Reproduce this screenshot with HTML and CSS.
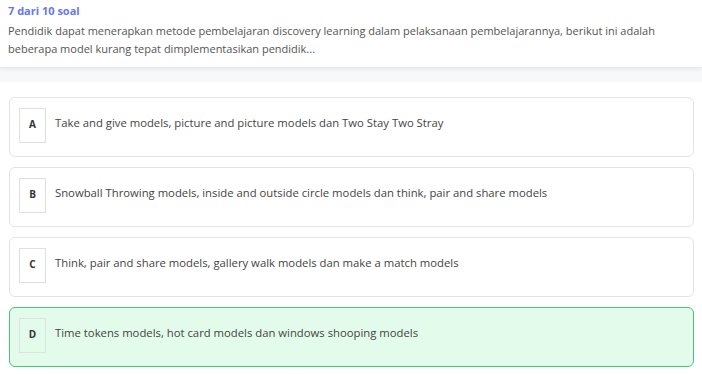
FILE: index.html
```html
<!DOCTYPE html>
<html lang="en">
<head>
    <meta charset="UTF-8">
    <meta name="viewport" content="width=device-width, initial-scale=1.0">
    <title>Soal</title>
    <link rel="stylesheet" href="styles.css">
</head>
<body>
    <header class="question-header">
        <div class="question-count">7 dari 10 soal</div>
        <p class="question-text">Pendidik dapat menerapkan metode pembelajaran discovery learning dalam pelaksanaan pembelajarannya, berikut ini adalah beberapa model kurang tepat dimplementasikan pendidik...</p>
    </header>
    <div class="spacer"></div>
    <main class="options">
        <div class="option">
            <span class="option-letter">A</span>
            <span class="option-text">Take and give models, picture and picture models dan Two Stay Two Stray</span>
        </div>
        <div class="option">
            <span class="option-letter">B</span>
            <span class="option-text">Snowball Throwing models, inside and outside circle models dan think, pair and share models</span>
        </div>
        <div class="option">
            <span class="option-letter">C</span>
            <span class="option-text">Think, pair and share models, gallery walk models dan make a match models</span>
        </div>
        <div class="option selected">
            <span class="option-letter">D</span>
            <span class="option-text">Time tokens models, hot card models dan windows shooping models</span>
        </div>
    </main>
</body>
</html>
```

FILE: styles.css
```css
body {
    margin: 0;
    padding: 0;
    font-family: "Open Sans", sans-serif;
    background: #fff;
    color: #444;
}

.question-header {
    background: #fff;
    padding: 2px 8px 9px;
    box-shadow: 0 2px 4px rgba(0, 0, 0, 0.08);
    position: relative;
}

.question-count {
    color: #6577f6;
    font-weight: 700;
    font-size: 11px;
    line-height: 18px;
}

.question-text {
    margin: 2px 0 0;
    font-size: 11px;
    line-height: 18px;
    color: #555;
}

.spacer {
    height: 15px;
    background: #f7f8fa;
}

.options {
    display: flex;
    flex-direction: column;
    gap: 10px;
    padding: 15px 8px 0 9px;
}

.option {
    display: flex;
    align-items: flex-start;
    gap: 9px;
    height: 60px;
    box-sizing: border-box;
    padding: 10px 9px;
    border: 1px solid #e3e3e3;
    border-radius: 6px;
    background: #fff;
}

.option.selected {
    background: #e3fbea;
    border-color: #4cc27a;
}

.option-letter {
    flex: none;
    width: 27px;
    height: 35px;
    box-sizing: border-box;
    padding-bottom: 3px;
    border: 1px solid #e0e0e0;
    display: flex;
    justify-content: center;
    align-items: center;
    font-size: 10px;
    font-weight: 700;
    color: #333;
}

.option-text {
    font-size: 11.3px;
    line-height: 30px;
    color: #444;
}
```
